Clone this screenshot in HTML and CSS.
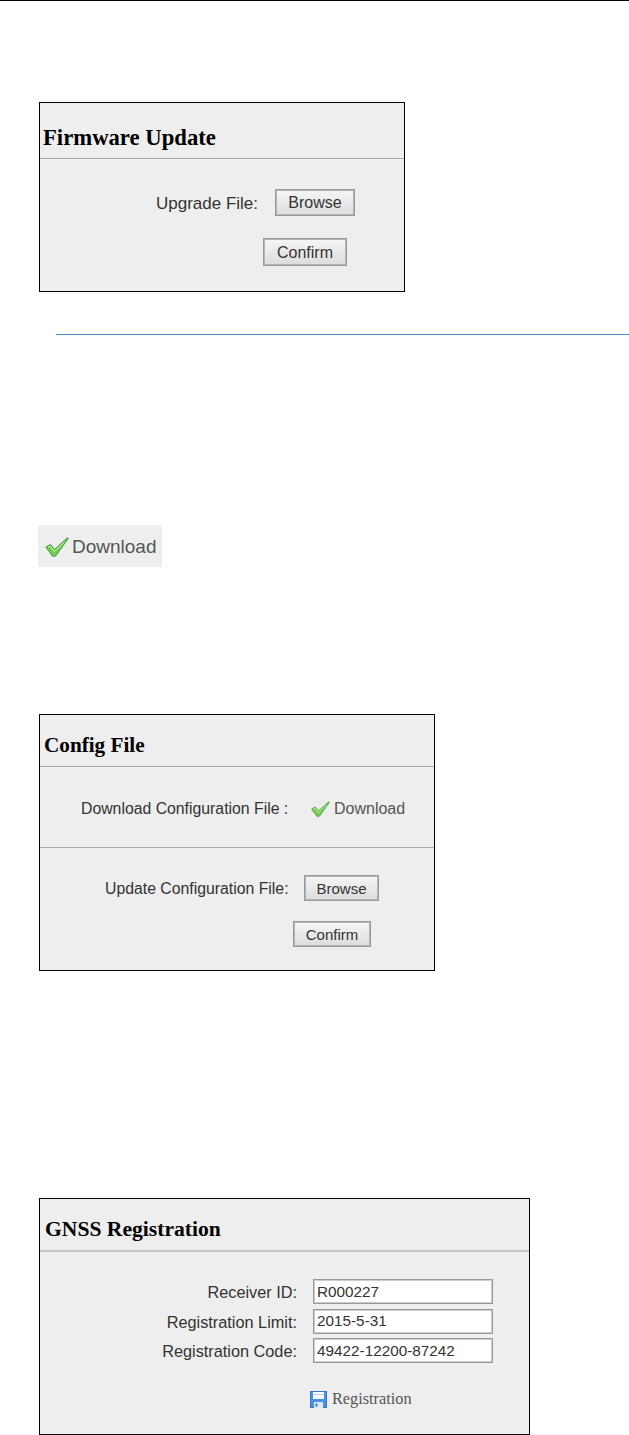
FILE: index.html
```html
<!DOCTYPE html>
<html lang="en">
<head>
    <meta charset="UTF-8">
    <title>Receiver manual</title>
    <link rel="stylesheet" href="styles.css">
</head>
<body>
<div class="page">

    <!--firmware-->
    <div class="panel p-firmware">
        <h2 class="title">Firmware Update</h2>
        <div class="row fw-r1">
            <span class="lbl">Upgrade File:</span>
            <button type="button" class="btn fw-browse">Browse</button>
        </div>
        <div class="row fw-r2">
            <button type="button" class="btn fw-confirm">Confirm</button>
        </div>
    </div>

    <div class="rule"></div>

    <!--download image-->
    <div class="chip">
        <svg class="check-big" viewBox="0 0 24 20" width="24" height="20">
            <path d="M0.8 10 L5.5 7.5 L9.5 12.5 L22.5 0.8 L23.2 1.6 L10.5 19.2 L7.5 19.2 Z" fill="#78cc50" stroke="#3f9a3a" stroke-width="1"/>
            <path d="M3 10.2 L5.4 9.2 L9.3 14.5 L19.5 5" fill="none" stroke="#d2f2bc" stroke-width="1"/>
        </svg>
        <span>Download</span>
    </div>

    <!--config-->
    <div class="panel p-config">
        <h2 class="title">Config File</h2>
        <div class="sec sec-down">
            <span class="lbl">Download Configuration File :</span>
            <svg class="check" viewBox="0 0 24 20" width="19" height="16">
                <path d="M0.8 10 L5.5 7.5 L9.5 12.5 L22.5 0.8 L23.2 1.6 L10.5 19.2 L7.5 19.2 Z" fill="#78cc50" stroke="#3f9a3a" stroke-width="1"/>
                <path d="M3 10.2 L5.4 9.2 L9.3 14.5 L19.5 5" fill="none" stroke="#d2f2bc" stroke-width="1"/>
            </svg>
            <span class="down-text">Download</span>
        </div>
        <div class="row cf-r1">
            <span class="lbl">Update Configuration File:</span>
            <button type="button" class="btn cf-browse">Browse</button>
        </div>
        <div class="row cf-r2">
            <button type="button" class="btn cf-confirm">Confirm</button>
        </div>
    </div>

    <!--registration-->
    <div class="panel p-reg">
        <h2 class="title">GNSS Registration</h2>
        <div class="form">
            <label class="lbl">Receiver ID:</label>
            <input class="inp" type="text" value="R000227">
            <label class="lbl">Registration Limit:</label>
            <input class="inp" type="text" value="2015-5-31">
            <label class="lbl">Registration Code:</label>
            <input class="inp" type="text" value="49422-12200-87242">
        </div>
        <div class="reg-link">
            <svg viewBox="0 0 17 17" width="17" height="17">
                <rect x="0.5" y="0.5" width="16" height="16" fill="#4a8fe8" stroke="#3a74cc"/>
                <rect x="3" y="1" width="11" height="7" fill="#f4f8fe"/>
                <rect x="3" y="3" width="11" height="1" fill="#bcd4f4"/>
                <rect x="4" y="11" width="9" height="6" fill="#dfe7f2"/>
                <rect x="5.5" y="12.5" width="2" height="3" fill="#3a74cc"/>
            </svg>
            <span>Registration</span>
        </div>
    </div>

</div>
</body>
</html>
```

FILE: styles.css
```css
html, body {
    margin: 0;
    padding: 0;
    background: #fff;
}

.page {
    height: 1434px;
    border-top: 1px solid #000;
    font-family: "Liberation Sans", Arial, sans-serif;
    overflow: hidden;
}

/*panels*/
.panel {
    margin-left: 39px;
    box-sizing: border-box;
    border: 1px solid #000;
    background: #eee;
}

.p-firmware {
    width: 366px;
    height: 190px;
    margin-top: 101px;
}

.p-config {
    width: 396px;
    height: 257px;
    margin-top: 147px;
}

.p-reg {
    width: 491px;
    height: 237px;
    margin-top: 227px;
}

.title {
    margin: 0;
    box-sizing: border-box;
    font-family: "Liberation Serif", "Times New Roman", serif;
    font-weight: bold;
    color: #000;
    border-bottom: 1px solid #aaa;
}

.p-firmware .title {
    height: 56px;
    padding: 14px 0 0 3px;
    font-size: 22.7px;
    line-height: 42px;
}

.p-config .title {
    height: 52px;
    padding: 12px 0 0 4px;
    font-size: 21.2px;
    line-height: 37px;
}

.p-reg .title {
    height: 53px;
    padding: 11px 0 0 5px;
    font-size: 21.6px;
    line-height: 39px;
    border-bottom-width: 2px;
    border-bottom-color: #c4c4c4;
}

.lbl {
    color: #333;
    font-size: 15.8px;
    padding-top: 2px;
}

.btn {
    box-sizing: border-box;
    padding: 0;
    border: 1px solid #999;
    box-shadow: inset 0 0 0 1px #b5b5b5;
    background: linear-gradient(#f6f6f6, #dcdcdc);
    color: #333;
    font-family: "Liberation Sans", Arial, sans-serif;
    font-size: 15px;
}

.row {
    display: flex;
    align-items: center;
}

/*firmware rows*/
.fw-r1 {
    margin-top: 30px;
    padding-left: 116px;
}

.fw-r1 .lbl {
    width: 119px;
    font-size: 17px;
}

.fw-browse {
    width: 80px;
    height: 27px;
    font-size: 16px;
}

.fw-r2 {
    margin-top: 22px;
    padding-left: 223px;
}

.fw-confirm {
    width: 84px;
    height: 28px;
    padding-top: 1px;
    font-size: 16px;
}

.rule {
    height: 1px;
    margin: 42px 0 0 56px;
    background: #4f86c6;
}

/*download image*/
.chip {
    display: flex;
    align-items: center;
    gap: 3px;
    width: 124px;
    height: 42px;
    margin: 190px 0 0 38px;
    padding: 2px 0 0 7px;
    box-sizing: border-box;
    background: #eee;
    color: #555;
    font-size: 19px;
}

/*config*/
.sec-down {
    display: flex;
    align-items: center;
    box-sizing: border-box;
    height: 81px;
    padding: 4px 0 0 41px;
    border-bottom: 1px solid #aaa;
}

.sec-down .lbl {
    width: 230px;
    padding-top: 0;
}

.check {
    margin-right: 4px;
}

.down-text {
    color: #555;
    font-size: 16px;
}

.cf-r1 {
    margin-top: 27px;
    padding-left: 65px;
}

.cf-r1 .lbl {
    width: 199px;
}

.cf-browse {
    width: 75px;
    height: 26px;
}

.cf-r2 {
    margin-top: 20px;
    padding-left: 253px;
}

.cf-confirm {
    width: 78px;
    height: 26px;
}

/*registration*/
.form {
    display: grid;
    grid-template-columns: 257px 180px;
    column-gap: 16px;
    row-gap: 4.5px;
    align-items: center;
    margin-top: 27px;
}

.form .lbl {
    text-align: right;
    font-size: 16.3px;
}

.inp {
    box-sizing: border-box;
    width: 180px;
    height: 25px;
    padding: 0 3px;
    border: 1px solid #999;
    box-shadow: inset 0 0 0 1px #ccc;
    background: #fff;
    color: #333;
    font-family: "Liberation Sans", Arial, sans-serif;
    font-size: 15.3px;
}

.reg-link {
    display: flex;
    align-items: center;
    gap: 5px;
    margin: 26px 0 0 270px;
    font-family: "Liberation Serif", "Times New Roman", serif;
    font-size: 16.3px;
    color: #555;
}
```
